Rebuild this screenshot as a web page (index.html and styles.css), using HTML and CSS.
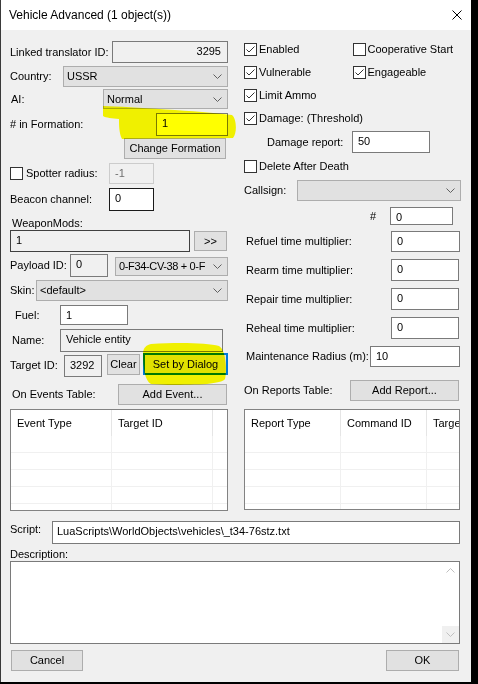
FILE: index.html
```html
<!DOCTYPE html>
<html>
<head>
<meta charset="utf-8">
<title>Vehicle Advanced</title>
<link rel="stylesheet" href="styles.css">
</head>
<body>
<div class="window">
  <div class="titlebar">
    <span class="title">Vehicle Advanced (1 object(s))</span>
    <svg class="close" width="10" height="10" viewBox="0 0 10 10"><path d="M0.5 0.5 L9.5 9.5 M9.5 0.5 L0.5 9.5" stroke="#000" stroke-width="1" fill="none"/></svg>
  </div>
  <div class="content">
    <div class="cols">
      <div class="col">
        <div class="row h22 mt11">
          <span class="lbl">Linked translator ID:</span>
          <div class="edit ro right w116 h22 push">3295</div>
        </div>
        <div class="row h21 mt3">
          <span class="lbl">Country:</span>
          <div class="combo w165 h21 push"><span class="ctext">USSR</span><svg class="chev" width="9" height="5" viewBox="0 0 9 5"><polyline points="0.5,0.5 4.5,4.5 8.5,0.5" fill="none" stroke="#606060"/></svg></div>
        </div>
        <div class="row h20 mt2">
          <span class="lbl pl1">AI:</span>
          <div class="combo w125 h20 push"><span class="ctext">Normal</span><svg class="chev" width="9" height="5" viewBox="0 0 9 5"><polyline points="0.5,0.5 4.5,4.5 8.5,0.5" fill="none" stroke="#606060"/></svg></div>
        </div>
        <div class="row h23 mt4">
          <span class="lbl"># in Formation:</span>
          <div class="edit w72 h23 push">1</div>
        </div>
        <div class="row h21 mt2">
          <div class="btn w102 h21 ml114">Change Formation</div>
        </div>
        <div class="row h21 mt4">
          <span class="cb"></span><span class="lbl lw83">Spotter radius:</span>
          <div class="edit dis w45 h21">-1</div>
        </div>
        <div class="row h23 mt4">
          <span class="lbl lw99">Beacon channel:</span>
          <div class="edit dark w45 h23">0</div>
        </div>
        <div class="row h14 mt5"><span class="lbl pl2">WeaponMods:</span></div>
        <div class="row h22">
          <div class="edit ro dark2 w180 h22">1</div>
          <div class="btn w33 h20 ml4">&gt;&gt;</div>
        </div>
        <div class="row h23 mt2 top">
          <span class="lbl lw60 selfc">Payload ID:</span>
          <div class="edit ro w38 h23">0</div>
          <div class="combo tight w113 h19 ml7 mt3"><span class="ctext">0-F34-CV-38 + 0-F</span><svg class="chev" width="9" height="5" viewBox="0 0 9 5"><polyline points="0.5,0.5 4.5,4.5 8.5,0.5" fill="none" stroke="#606060"/></svg></div>
        </div>
        <div class="row h21 mt3">
          <span class="lbl">Skin:</span>
          <div class="combo w192 h21 push"><span class="ctext">&lt;default&gt;</span><svg class="chev" width="9" height="5" viewBox="0 0 9 5"><polyline points="0.5,0.5 4.5,4.5 8.5,0.5" fill="none" stroke="#606060"/></svg></div>
        </div>
        <div class="row h20 mt4">
          <span class="lbl lw50 pl5">Fuel:</span>
          <div class="edit w68 h20">1</div>
        </div>
        <div class="row h23 mt4">
          <span class="lbl lw50 pl2">Name:</span>
          <div class="edit ro w163 h23">Vehicle entity</div>
        </div>
        <div class="row h24 mt1 top">
          <span class="lbl lw54 selfc">Target ID:</span>
          <div class="edit ro w38 h22 mt2">3292</div>
          <div class="btn w33 h21 ml5 mt1">Clear</div>
          <div class="btn focus w85 h22 ml3">Set by Dialog</div>
        </div>
        <div class="row h21 mt7">
          <span class="lbl pl2">On Events Table:</span>
          <div class="btn w109 h21 push mr1">Add Event...</div>
        </div>
        <div class="table ev mt4">
          <div class="thead">
            <div class="th c1">Event Type</div>
            <div class="th c2">Target ID</div>
            <div class="th c3"></div>
          </div>
          <div class="tr"><div class="td c1"></div><div class="td c2"></div><div class="td c3"></div></div>
          <div class="tr"><div class="td c1"></div><div class="td c2"></div><div class="td c3"></div></div>
          <div class="tr"><div class="td c1"></div><div class="td c2"></div><div class="td c3"></div></div>
          <div class="tr"><div class="td c1"></div><div class="td c2"></div><div class="td c3"></div></div>
          <div class="tr"><div class="td c1"></div><div class="td c2"></div><div class="td c3"></div></div>
        </div>
      </div>

      <div class="col">
        <div class="crow mt12">
          <span class="cgrp"><span class="cb"><svg width="11" height="11" viewBox="0 0 11 11"><polyline points="1.5,5.5 4,8 9.5,2.5" fill="none" stroke="#333" stroke-width="1"/></svg></span>Enabled</span>
          <span class="cgrp"><span class="cb"></span>Cooperative Start</span>
        </div>
        <div class="crow mt9">
          <span class="cgrp"><span class="cb"><svg width="11" height="11" viewBox="0 0 11 11"><polyline points="1.5,5.5 4,8 9.5,2.5" fill="none" stroke="#333" stroke-width="1"/></svg></span>Vulnerable</span>
          <span class="cgrp"><span class="cb"><svg width="11" height="11" viewBox="0 0 11 11"><polyline points="1.5,5.5 4,8 9.5,2.5" fill="none" stroke="#333" stroke-width="1"/></svg></span>Engageable</span>
        </div>
        <div class="crow mt9">
          <span class="cgrp"><span class="cb"><svg width="11" height="11" viewBox="0 0 11 11"><polyline points="1.5,5.5 4,8 9.5,2.5" fill="none" stroke="#333" stroke-width="1"/></svg></span>Limit Ammo</span>
        </div>
        <div class="crow mt9">
          <span class="cgrp wide"><span class="cb"><svg width="11" height="11" viewBox="0 0 11 11"><polyline points="1.5,5.5 4,8 9.5,2.5" fill="none" stroke="#333" stroke-width="1"/></svg></span>Damage: (Threshold)</span>
        </div>
        <div class="row h22 mt6">
          <span class="lbl lw108 pl23">Damage report:</span>
          <div class="edit w78 h22">50</div>
        </div>
        <div class="crow mt6">
          <span class="cgrp wide"><span class="cb"></span>Delete After Death</span>
        </div>
        <div class="row h21 mt7">
          <span class="lbl">Callsign:</span>
          <div class="combo w164 h21 push"><span class="ctext"></span><svg class="chev" width="9" height="5" viewBox="0 0 9 5"><polyline points="0.5,0.5 4.5,4.5 8.5,0.5" fill="none" stroke="#606060"/></svg></div>
        </div>
        <div class="row h18 mt6">
          <span class="lbl lw146 pl126">#</span>
          <div class="edit w63 h18">0</div>
        </div>
        <div class="row h21 mt6">
          <span class="lbl pl2">Refuel time multiplier:</span>
          <div class="edit w69 h21 push mr1">0</div>
        </div>
        <div class="row h22 mt7">
          <span class="lbl pl2">Rearm time multiplier:</span>
          <div class="edit w68 h22 push mr2">0</div>
        </div>
        <div class="row h22 mt7">
          <span class="lbl pl2">Repair time multiplier:</span>
          <div class="edit w68 h22 push mr2">0</div>
        </div>
        <div class="row h22 mt7">
          <span class="lbl pl2">Reheal time multiplier:</span>
          <div class="edit w68 h22 push mr2">0</div>
        </div>
        <div class="row h21 mt7">
          <span class="lbl lw126 pl2">Maintenance Radius (m):</span>
          <div class="edit w90 h21">10</div>
        </div>
        <div class="row h21 mt13">
          <span class="lbl">On Reports Table:</span>
          <div class="btn w109 h21 push mr2">Add Report...</div>
        </div>
        <div class="table rep mt8">
          <div class="thead">
            <div class="th c1">Report Type</div>
            <div class="th c2">Command ID</div>
            <div class="th c3">Target ID</div>
          </div>
          <div class="tr"><div class="td c1"></div><div class="td c2"></div><div class="td c3"></div></div>
          <div class="tr"><div class="td c1"></div><div class="td c2"></div><div class="td c3"></div></div>
          <div class="tr"><div class="td c1"></div><div class="td c2"></div><div class="td c3"></div></div>
          <div class="tr"><div class="td c1"></div><div class="td c2"></div><div class="td c3"></div></div>
          <div class="tr"><div class="td c1"></div><div class="td c2"></div><div class="td c3"></div></div>
        </div>
      </div>
    </div>

    <div class="bottom">
      <div class="row h23 mt10 top">
        <span class="lbl lw42 pt2">Script:</span>
        <div class="edit grow h23 pl4">LuaScripts\WorldObjects\vehicles\_t34-76stz.txt</div>
      </div>
      <div class="row h13 mt4"><span class="lbl">Description:</span></div>
      <div class="memo">
        <div class="sb">
          <div class="sbtn"><svg width="9" height="5" viewBox="0 0 9 5"><polyline points="0.5,4.5 4.5,0.5 8.5,4.5" fill="none" stroke="#c0c0c0"/></svg></div>
          <div class="sbtn hov"><svg width="9" height="5" viewBox="0 0 9 5"><polyline points="0.5,0.5 4.5,4.5 8.5,0.5" fill="none" stroke="#c0c0c0"/></svg></div>
        </div>
      </div>
      <div class="row h21 mt6">
        <div class="btn w72 h21 ml1">Cancel</div>
        <div class="btn w73 h21 push mr1">OK</div>
      </div>
    </div>
  </div>

  <svg class="highlight" width="471" height="682" viewBox="0 0 471 682">
    <path d="M103,106 C130,107 200,111 232,115 C237,119 237,134 233,138 L122,139 C119,133 119,125 119,119 C112,118 106,118 103,116 Z" fill="#ffff00"/>
    <path d="M151,344 C180,342 208,343 219,346 C226,350 227,370 225,379 C221,384 200,385 168,385 L151,384 C145,381 143,368 143,354 C143,348 146,345 151,344 Z" fill="#ffff00"/>
  </svg>
</div>
</body>
</html>
```

FILE: styles.css
```css
html, body {
  margin: 0;
  padding: 0;
}
body {
  width: 478px;
  height: 684px;
  overflow: hidden;
  background: #000;
  font-family: "Liberation Sans", Arial, sans-serif;
  font-size: 11px;
  color: #000;
}
.window {
  position: relative;
  box-sizing: border-box;
  width: 471px;
  height: 682px;
  background: #f0f0f0;
  border-left: 1px solid #3a3a3a;
}
.titlebar {
  height: 30px;
  background: #fff;
  display: flex;
  align-items: center;
  padding-left: 8px;
}
.title {
  font-size: 12px;
  line-height: 14px;
}
.close {
  margin-left: auto;
  margin-right: 9px;
}
.content {
  padding-left: 9px;
}
.cols {
  display: grid;
  grid-template-columns: 218px 217px;
  column-gap: 16px;
  align-items: start;
}
.col {
  display: flex;
  flex-direction: column;
}
.row {
  display: flex;
  align-items: center;
  flex: none;
}
.row.top { align-items: flex-start; }
.selfc { align-self: center; }
.lbl {
  white-space: nowrap;
  line-height: 13px;
  flex: none;
  box-sizing: border-box;
}
.push { margin-left: auto; }
.grow { flex: 1; }

/* sizes */
.h13 { height: 13px; }
.h14 { height: 14px; }
.h18 { height: 18px; }
.h19 { height: 19px; }
.h20 { height: 20px; }
.h21 { height: 21px; }
.h22 { height: 22px; }
.h23 { height: 23px; }
.h24 { height: 24px; }
.mt1 { margin-top: 1px; }
.mt2 { margin-top: 2px; }
.mt3 { margin-top: 3px; }
.mt4 { margin-top: 4px; }
.mt5 { margin-top: 5px; }
.mt6 { margin-top: 6px; }
.mt7 { margin-top: 7px; }
.mt8 { margin-top: 8px; }
.mt9 { margin-top: 9px; }
.mt10 { margin-top: 10px; }
.mt11 { margin-top: 11px; }
.mt12 { margin-top: 12px; }
.mt13 { margin-top: 13px; }
.ml1 { margin-left: 1px; }
.ml3 { margin-left: 3px; }
.ml4 { margin-left: 4px; }
.ml5 { margin-left: 5px; }
.ml7 { margin-left: 7px; }
.ml114 { margin-left: 114px; }
.mr1 { margin-right: 1px; }
.mr2 { margin-right: 2px; }
.pl1 { padding-left: 1px; }
.pl2 { padding-left: 2px; }
.pl5 { padding-left: 5px; }
.pl23 { padding-left: 23px; }
.pl126 { padding-left: 126px; }
.pt2 { padding-top: 2px; }
.lw42 { width: 42px; }
.lw50 { width: 50px; }
.lw54 { width: 54px; }
.lw60 { width: 60px; }
.lw83 { width: 83px; }
.lw99 { width: 99px; }
.lw108 { width: 108px; }
.lw126 { width: 126px; }
.lw146 { width: 146px; }
.w33 { width: 33px; }
.w38 { width: 38px; }
.w45 { width: 45px; }
.w63 { width: 63px; }
.w68 { width: 68px; }
.w69 { width: 69px; }
.w72 { width: 72px; }
.w73 { width: 73px; }
.w78 { width: 78px; }
.w85 { width: 85px; }
.w90 { width: 90px; }
.w102 { width: 102px; }
.w109 { width: 109px; }
.w113 { width: 113px; }
.w116 { width: 116px; }
.w125 { width: 125px; }
.w163 { width: 163px; }
.w164 { width: 164px; }
.w165 { width: 165px; }
.w180 { width: 180px; }
.w192 { width: 192px; }

/* edit boxes */
.edit {
  box-sizing: border-box;
  flex: none;
  border: 1px solid #7a7a7a;
  background: #fff;
  padding: 3px 5px 0 5px;
  line-height: 13px;
  white-space: nowrap;
  overflow: hidden;
}
.edit.grow { flex: 1; }
.edit.pl4 { padding-left: 4px; }
.edit.ro { background: #f0f0f0; }
.edit.right { text-align: right; padding-right: 6px; }
.edit.dis { border-color: #cccccc; background: #f0f0f0; color: #6d6d6d; }
.edit.dark { border-color: #1a1a1a; }
.edit.dark2 { border-color: #404040; }

/* combo boxes */
.combo {
  box-sizing: border-box;
  flex: none;
  border: 1px solid #adadad;
  background: #e1e1e1;
  display: flex;
  align-items: center;
  padding-left: 3px;
}
.ctext {
  flex: 1;
  white-space: nowrap;
  overflow: hidden;
  line-height: 13px;
}
.chev {
  flex: none;
  margin-left: 4px;
  margin-right: 5px;
}
.combo.tight .ctext { letter-spacing: -0.35px; }
.combo.tight .chev { margin-left: 1px; }

/* buttons */
.btn {
  box-sizing: border-box;
  flex: none;
  border: 1px solid #adadad;
  background: #e1e1e1;
  display: flex;
  align-items: center;
  justify-content: center;
  white-space: nowrap;
  line-height: 13px;
}
.btn.focus {
  border: 2px solid #0078d7;
}

/* check boxes */
.cb {
  box-sizing: border-box;
  flex: none;
  width: 13px;
  height: 13px;
  border: 1px solid #333;
  background: #fff;
  margin-right: 3px;
  display: flex;
}
.crow {
  display: flex;
  height: 14px;
  align-items: center;
  flex: none;
}
.cgrp {
  display: flex;
  align-items: center;
  width: 110px;
  white-space: nowrap;
  line-height: 13px;
}
.cgrp .cb { margin-right: 2px; }
.cgrp.wide { width: 200px; }

/* tables */
.table {
  box-sizing: border-box;
  border: 1px solid #828282;
  background: #fff;
  overflow: hidden;
  flex: none;
}
.table.ev { width: 218px; height: 102px; }
.table.rep { width: 216px; height: 101px; }
.thead {
  display: flex;
  height: 26px;
}
.th {
  box-sizing: border-box;
  flex: none;
  display: flex;
  align-items: center;
  padding-left: 6px;
  border-right: 1px solid #e5e5e5;
  white-space: nowrap;
  overflow: hidden;
  line-height: 13px;
}
.tr {
  display: flex;
  height: 17px;
  box-sizing: border-box;
  border-bottom: 1px solid #f0f0f0;
}
.td {
  box-sizing: border-box;
  flex: none;
  border-right: 1px solid #f0f0f0;
}
.ev .c1 { width: 101px; }
.ev .c2 { width: 101px; }
.ev .c3 { width: 30px; }
.rep .c1 { width: 96px; }
.rep .c2 { width: 86px; }
.rep .c3 { width: 60px; }
.th.c3 { border-right: none; }

/* bottom */
.bottom {
  width: 450px;
  display: flex;
  flex-direction: column;
}
.memo {
  box-sizing: border-box;
  height: 83px;
  border: 1px solid #7a7a7a;
  background: #fff;
  display: flex;
  justify-content: flex-end;
}
.sb {
  width: 17px;
  display: flex;
  flex-direction: column;
  justify-content: space-between;
}
.sbtn {
  height: 17px;
  display: flex;
  align-items: center;
  justify-content: center;
}
.sbtn.hov { background: #f0f0f0; }

/* highlighter marks */
.highlight {
  position: absolute;
  left: -1px;
  top: 0;
  pointer-events: none;
  mix-blend-mode: multiply;
}
```
